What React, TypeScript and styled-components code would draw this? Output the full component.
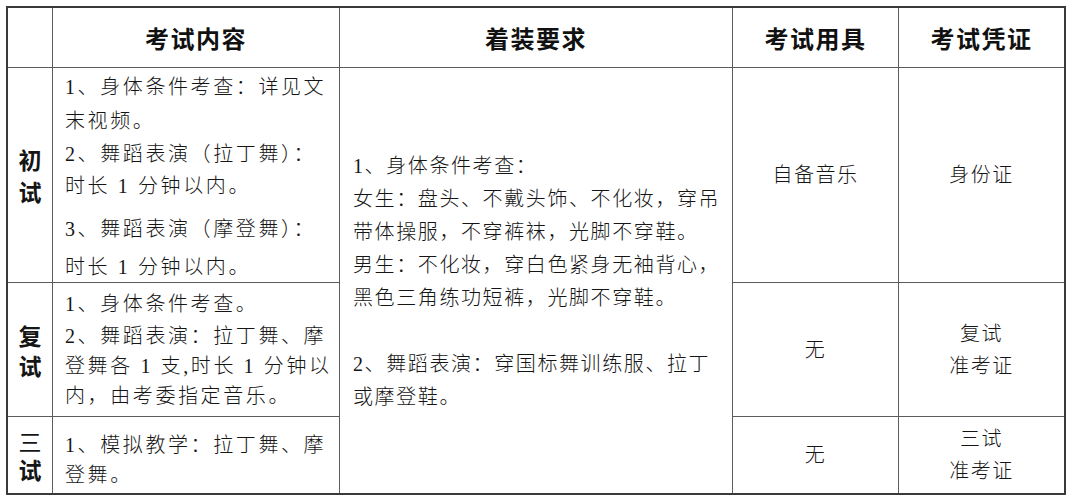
import React from 'react';
import styled, { createGlobalStyle } from 'styled-components';

const GlobalStyle = createGlobalStyle`
  html, body {
    margin: 0;
    background: #fff;
  }
  body {
    font-family: "Liberation Serif", "Noto Sans CJK SC", serif;
    color: #151515;
  }
`;

interface ParaData {
  lh: number;
  mt?: number;
  lines: string[];
}

interface RoundData {
  label: string[];
  lightFirst?: boolean;
  labelLh: number;
  padTop: number;
  paras: ParaData[];
  tool: string[];
  cert: string[];
  certLh: number;
}

const rounds: RoundData[] = [
  {
    label: ['初', '试'],
    labelLh: 32,
    padTop: 2,
    paras: [
      { lh: 34, lines: ['1、身体条件考查：详见文', '末视频。'] },
      { lh: 32, lines: ['2、舞蹈表演（拉丁舞）：', '时长 1 分钟以内。'] },
      { lh: 38, mt: 8, lines: ['3、舞蹈表演（摩登舞）：', '时长 1 分钟以内。'] },
    ],
    tool: ['自备音乐'],
    cert: ['身份证'],
    certLh: 32,
  },
  {
    label: ['复', '试'],
    labelLh: 30,
    padTop: 4,
    paras: [
      { lh: 34, lines: ['1、身体条件考查。'] },
      { lh: 30, lines: ['2、舞蹈表演：拉丁舞、摩', '登舞各 1 支,时长 1 分钟以', '内，由考委指定音乐。'] },
    ],
    tool: ['无'],
    cert: ['复试', '准考证'],
    certLh: 32,
  },
  {
    label: ['三', '试'],
    lightFirst: true,
    labelLh: 28,
    padTop: 13,
    paras: [{ lh: 30, lines: ['1、模拟教学：拉丁舞、摩', '登舞。'] }],
    tool: ['无'],
    cert: ['三试', '准考证'],
    certLh: 32,
  },
];

const dressLines = [
  '1、身体条件考查：',
  '女生：盘头、不戴头饰、不化妆，穿吊',
  '带体操服，不穿裤袜，光脚不穿鞋。',
  '男生：不化妆，穿白色紧身无袖背心，',
  '黑色三角练功短裤，光脚不穿鞋。',
  '',
  '2、舞蹈表演：穿国标舞训练服、拉丁',
  '或摩登鞋。',
];

const headers = ['', '考试内容', '着装要求', '考试用具', '考试凭证'];

const App: React.FC = () => {
  return (
    <Page>
      <GlobalStyle />
      <Table>
        {headers.map((h, i) => (
          <HeadCell key={`h${i}`}>{h}</HeadCell>
        ))}
        {rounds.map((r, ri) => (
          <React.Fragment key={`r${ri}`}>
            <LabelCell $lh={r.labelLh}>
              {r.label.map((ch, ci) => (
                <LabelChar key={ci} $light={!!r.lightFirst && ci === 0}>
                  {ch}
                </LabelChar>
              ))}
            </LabelCell>
            <ContentCell $pt={r.padTop}>
              {r.paras.map((p, pi) => (
                <Para key={pi} $lh={p.lh} $mt={p.mt ?? 0}>
                  {p.lines.map((l, li) => (
                    <Line key={li}>{l}</Line>
                  ))}
                </Para>
              ))}
            </ContentCell>
            {ri === 0 && (
              <DressCell>
                {dressLines.map((l, li) => (
                  <Line key={li}>{l || '\u00a0'}</Line>
                ))}
              </DressCell>
            )}
            <CenterCell $lh={32}>
              {r.tool.map((t, ti) => (
                <Line key={ti}>{t}</Line>
              ))}
            </CenterCell>
            <CenterCell $lh={r.certLh}>
              {r.cert.map((t, ti) => (
                <Line key={ti}>{t}</Line>
              ))}
            </CenterCell>
          </React.Fragment>
        ))}
      </Table>
    </Page>
  );
};

export default App;

const Page = styled.div`
  padding: 6px;
`;

const Table = styled.div`
  display: grid;
  grid-template-columns: 44px 286px 392px 165px 165px;
  grid-template-rows: 59px 214px 133px 76px;
  gap: 1px;
  width: max-content;
  background: #5c5c5c;
  border: 2px solid #3a3a3a;
`;

const Cell = styled.div`
  background: #fff;
  overflow: hidden;
`;

const HeadCell = styled(Cell)`
  display: flex;
  align-items: center;
  justify-content: center;
  font-family: "Noto Sans CJK SC", sans-serif;
  font-weight: 700;
  font-size: 24px;
  letter-spacing: 1.5px;
  color: #111;
`;

const LabelCell = styled(Cell)<{ $lh: number }>`
  display: flex;
  flex-direction: column;
  align-items: center;
  justify-content: center;
  font-family: "Noto Sans CJK SC", sans-serif;
  font-size: 23px;
  line-height: ${(p) => p.$lh}px;
`;

const LabelChar = styled.span<{ $light: boolean }>`
  font-weight: ${(p) => (p.$light ? 400 : 700)};
`;

const ContentCell = styled(Cell)<{ $pt: number }>`
  padding: ${(p) => p.$pt}px 6px 0 12px;
  font-size: 20px;
  font-weight: 300;
  letter-spacing: 2.6px;
`;

const Para = styled.div<{ $lh: number; $mt: number }>`
  line-height: ${(p) => p.$lh}px;
  margin-top: ${(p) => p.$mt}px;
`;

const Line = styled.div`
  white-space: nowrap;
`;

const DressCell = styled(Cell)`
  grid-column: 3;
  grid-row: 2 / 5;
  display: flex;
  flex-direction: column;
  justify-content: center;
  padding: 2px 10px 0 13px;
  font-size: 20px;
  font-weight: 300;
  line-height: 33px;
  letter-spacing: 1.6px;
`;

const CenterCell = styled(Cell)<{ $lh: number }>`
  display: flex;
  flex-direction: column;
  align-items: center;
  justify-content: center;
  font-size: 20px;
  font-weight: 300;
  line-height: ${(p) => p.$lh}px;
  letter-spacing: 1.5px;
`;
